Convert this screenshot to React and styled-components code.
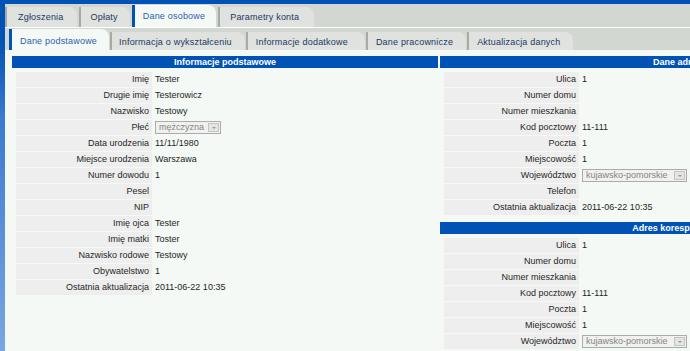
import React from 'react';
import styled, { createGlobalStyle } from 'styled-components';

const GlobalStyle = createGlobalStyle`
  html, body {
    margin: 0;
    padding: 0;
    overflow: hidden;
    background: #0052b4;
  }
  body {
    font-family: "Liberation Sans", Arial, sans-serif;
  }
`;

const Page = styled.div`
  width: 940px;
  min-height: 351px;
  padding: 4px 0 0 5px;
  box-sizing: border-box;
  background: linear-gradient(to bottom, #0052b4 0px, #0052b4 40px, #3d7bd0 120px, #78a7e2 351px);
  display: flex;
  flex-direction: column;
`;

const TopBar = styled.div`
  height: 23px;
  background: #d3d7d1;
  border-bottom: 1px solid #ffffff;
  display: flex;
  align-items: flex-end;
  gap: 2px;
`;

const SubBar = styled.div`
  height: 22px;
  background: #d3d7d1;
  display: flex;
  align-items: flex-end;
  gap: 1px;
  padding-left: 4px;
`;

const Tab = styled.div`
  height: ${(p) => p.$h}px;
  line-height: ${(p) => p.$lh}px;
  padding: 0 ${(p) => p.$pr}px 0 ${(p) => p.$pl}px;
  font-size: 9px;
  letter-spacing: 0.2px;
  white-space: nowrap;
  color: ${(p) => (p.$active ? '#2d5fae' : '#22385f')};
  background: ${(p) => (p.$active ? '#f4f9f6' : '#dfe2de')};
  border-left: ${(p) => (p.$active ? '3px solid #0052b4' : '2px solid #a7aba6')};
  border-top-right-radius: 8px;
`;

const Content = styled.div`
  flex: 1;
  background: #f4f9f6;
  padding: 6px 0 0 7px;
  display: flex;
  align-items: flex-start;
  gap: 2px;
`;

const Column = styled.div`
  width: ${(p) => p.$w}px;
  display: flex;
  flex-direction: column;
`;

const Header = styled.div`
  height: 12px;
  line-height: 12px;
  background: #0052b4;
  color: #ffffff;
  font-size: 9px;
  font-weight: bold;
  text-align: center;
  margin-top: ${(p) => p.$mt || 0}px;
`;

const Rows = styled.div`
  display: grid;
  grid-template-columns: ${(p) => p.$label}px 1fr;
  row-gap: 1px;
  margin: 4px 0 0 4px;
`;

const Label = styled.div`
  height: 15px;
  line-height: 15px;
  background: #eeeeee;
  color: #262626;
  font-size: 9px;
  text-align: right;
  padding-right: 3px;
  white-space: nowrap;
`;

const Value = styled.div`
  height: 15px;
  line-height: 15px;
  color: #1e1e1e;
  font-size: 9px;
  padding-left: 3px;
  display: flex;
  align-items: center;
  white-space: nowrap;
`;

const Select = styled.div`
  width: ${(p) => p.$w}px;
  height: 13px;
  box-sizing: border-box;
  border: 1px solid #a9aca9;
  background: #f1f1ef;
  display: flex;
  align-items: center;
  justify-content: space-between;
  color: #858585;
  font-size: 9px;
  padding-left: 3px;
`;

const SelectButton = styled.span`
  width: 11px;
  height: 9px;
  margin-right: 1px;
  background: #e4e4e0;
  border: 1px solid #c4c6c2;
  box-sizing: border-box;
  display: flex;
  align-items: center;
  justify-content: center;
  &::after {
    content: '';
    border-left: 2px solid transparent;
    border-right: 2px solid transparent;
    border-top: 2px solid #9a9a9a;
  }
`;

const mainTabs = [
  { name: 'Zgłoszenia', pl: 11, pr: 13 },
  { name: 'Opłaty', pl: 10, pr: 12 },
  { name: 'Dane osobowe', pl: 8, pr: 11, active: true },
  { name: 'Parametry konta', pl: 10, pr: 15 },
];

const subTabs = [
  { name: 'Dane podstawowe', pl: 8, pr: 12, active: true },
  { name: 'Informacja o wykształceniu', pl: 7, pr: 13 },
  { name: 'Informacje dodatkowe', pl: 8, pr: 17 },
  { name: 'Dane pracownicze', pl: 8, pr: 13 },
  { name: 'Aktualizacja danych', pl: 8, pr: 13 },
];

const personal = [
  ['Imię', 'Tester'],
  ['Drugie imię', 'Testerowicz'],
  ['Nazwisko', 'Testowy'],
  ['Płeć', { select: 'mężczyzna', w: 66 }],
  ['Data urodzenia', '11/11/1980'],
  ['Miejsce urodzenia', 'Warszawa'],
  ['Numer dowodu', '1'],
  ['Pesel', ''],
  ['NIP', ''],
  ['Imię ojca', 'Tester'],
  ['Imię matki', 'Toster'],
  ['Nazwisko rodowe', 'Testowy'],
  ['Obywatelstwo', '1'],
  ['Ostatnia aktualizacja', '2011-06-22 10:35'],
];

const address = [
  ['Ulica', '1'],
  ['Numer domu', ''],
  ['Numer mieszkania', ''],
  ['Kod pocztowy', '11-111'],
  ['Poczta', '1'],
  ['Miejscowość', '1'],
  ['Województwo', { select: 'kujawsko-pomorskie', w: 105 }],
  ['Telefon', ''],
  ['Ostatnia aktualizacja', '2011-06-22 10:35'],
];

const postal = address.slice(0, 7);

const FieldRows = ({ items, label }) => (
  <Rows $label={label}>
    {items.map(([name, val]) => (
      <React.Fragment key={name}>
        <Label>{name}</Label>
        <Value>
          {val && val.select ? (
            <Select $w={val.w}>
              {val.select}
              <SelectButton />
            </Select>
          ) : (
            val
          )}
        </Value>
      </React.Fragment>
    ))}
  </Rows>
);

const App = () => (
  <>
    <GlobalStyle />
    <Page>
      <TopBar>
        {mainTabs.map((t) => (
          <Tab
            key={t.name}
            $active={t.active}
            $h={t.active ? 22 : 20}
            $lh={t.active ? 22 : 20}
            $pl={t.pl}
            $pr={t.pr}
          >
            {t.name}
          </Tab>
        ))}
      </TopBar>
      <SubBar>
        {subTabs.map((t) => (
          <Tab
            key={t.name}
            $active={t.active}
            $h={t.active ? 21 : 18}
            $lh={t.active ? 24 : 20}
            $pl={t.pl}
            $pr={t.pr}
          >
            {t.name}
          </Tab>
        ))}
      </SubBar>
      <Content>
        <Column $w={426}>
          <Header>Informacje podstawowe</Header>
          <FieldRows items={personal} label={136} />
        </Column>
        <Column $w={492}>
          <Header>Dane adresowe</Header>
          <FieldRows items={address} label={135} />
          <Header $mt={7}>Adres korespondencyjny</Header>
          <FieldRows items={postal} label={135} />
        </Column>
      </Content>
    </Page>
  </>
);

export default App;
